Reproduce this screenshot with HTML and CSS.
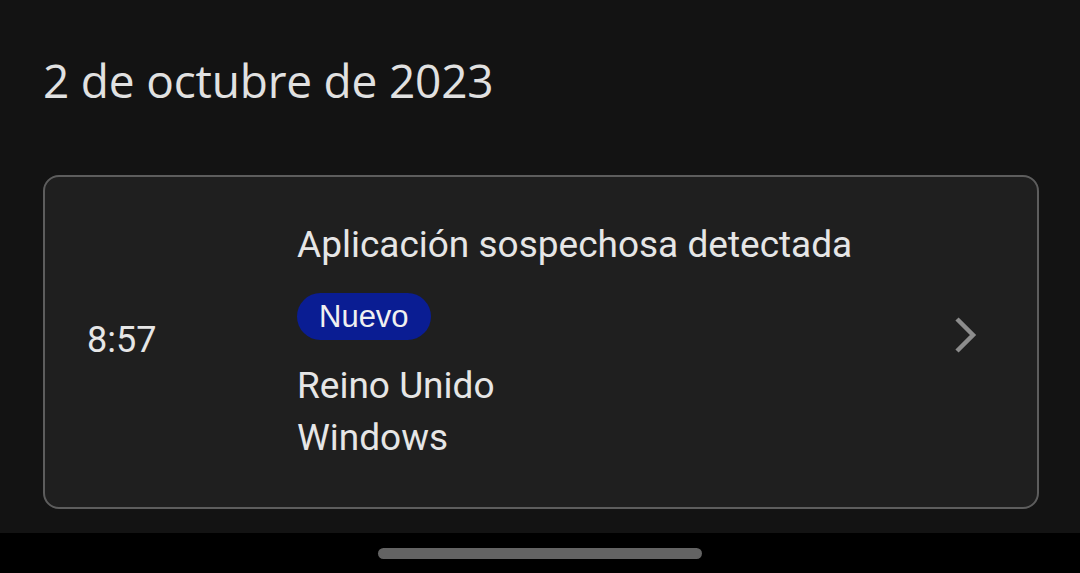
FILE: index.html
```html
<!DOCTYPE html>
<html lang="es">
<head>
<meta charset="utf-8">
<link rel="stylesheet" href="styles.css">
</head>
<body>
<div class="screen">
  <main class="content">
    <h1 class="date">2 de octubre de 2023</h1>
    <div class="card">
      <div class="time">8:57</div>
      <div class="details">
        <div class="title">Aplicación sospechosa detectada</div>
        <span class="badge">Nuevo</span>
        <div class="meta">Reino Unido</div>
        <div class="meta">Windows</div>
      </div>
      <svg class="chevron" width="24" height="38" viewBox="0 0 24 38">
        <path d="M3 3 L19 19 L3 35" fill="none" stroke="#8c8c8c" stroke-width="4.5" stroke-linecap="butt" stroke-linejoin="miter"/>
      </svg>
    </div>
  </main>
  <footer class="navbar"><div class="handle"></div></footer>
</div>
</body>
</html>
```
FILE: styles.css
```css
* { box-sizing: border-box; margin: 0; padding: 0; }
html, body { width: 1080px; height: 573px; overflow: hidden; background: #131313; }
body { font-family: Roboto, "Noto Sans", sans-serif; color: #e3e3e3; }
.screen { display: flex; flex-direction: column; height: 573px; }
.content { flex: 1; padding: 52px 41px 0 43px; }
.date {
  font-family: "Open Sans", Roboto, sans-serif;
  font-weight: 400;
  font-size: 46px;
  line-height: 56px;
  color: #e1e1e1;
  letter-spacing: -0.2px;
}
.card {
  margin-top: 67px;
  height: 334px;
  border: 2px solid #5d5d5d;
  border-radius: 16px;
  background: #1f1f1f;
  display: flex;
  align-items: center;
}
.time {
  width: 252px;
  padding-left: 42px;
  font-size: 36px;
  color: #e6e6e6;
  margin-top: -4px;
}
.details { flex: 1; display: flex; flex-direction: column; align-items: flex-start; padding-top: 4px; }
.title { font-size: 37px; line-height: 40px; color: #e6e6e6; }
.badge {
  margin-top: 28px;
  background: #0a1d93;
  color: #f0f0f0;
  font-family: "Liberation Sans", Arial, sans-serif;
  font-size: 31px;
  line-height: 47px;
  height: 47px;
  padding: 0 22px;
  border-radius: 24px;
}
.meta { font-size: 37px; line-height: 52px; color: #e6e6e6; }
.badge + .meta { margin-top: 20px; }
.chevron { margin-right: 59px; margin-top: -14px; }
.navbar { height: 40px; background: #000; display: flex; justify-content: center; align-items: center; }
.handle { width: 324px; height: 11px; border-radius: 6px; background: #636363; }
```
